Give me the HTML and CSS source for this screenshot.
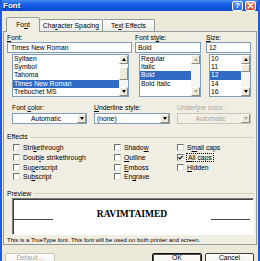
FILE: index.html
```html
<!DOCTYPE html>
<html lang="en">
<head>
  <meta charset="UTF-8" />
  <title>Font</title>
  <link rel="stylesheet" href="styles.css">
</head>
<body>
  <div class="window">
    <div class="titlebar">
      <span class="title">Font</span>
      <div class="caption">
        <span class="cbtn help">?</span>
        <span class="cbtn close">
          <svg width="7" height="7" viewBox="0 0 7 7"><path d="M1 1 L6 6 M6 1 L1 6" stroke="#fff" stroke-width="1.4" stroke-linecap="round"/></svg>
        </span>
      </div>
    </div>

    <div class="tabs">
      <span class="tab active tab-font">Fo<u>n</u>t</span>
      <span class="tab tab-spacing">Cha<u>r</u>acter Spacing</span>
      <span class="tab tab-effects">Te<u>x</u>t Effects</span>
    </div>

    <div class="panel">
      <div class="pickers">
        <div class="picker">
          <span class="lbl"><u>F</u>ont:</span>
          <div class="edit edit-font">Times New Roman</div>
          <div class="list list-font">
            <ul>
              <li>Sylfaen</li>
              <li>Symbol</li>
              <li>Tahoma</li>
              <li class="sel">Times New Roman</li>
              <li>Trebuchet MS</li>
            </ul>
            <div class="vscroll">
              <span class="sbtn up"></span>
              <span class="track t-font-a"></span>
              <span class="thumb t-font"></span>
              <span class="track"></span>
              <span class="sbtn down"></span>
            </div>
          </div>
        </div>
        <div class="picker">
          <span class="lbl">Font st<u>y</u>le:</span>
          <div class="edit edit-style">Bold</div>
          <div class="list list-style">
            <ul>
              <li>Regular</li>
              <li>Italic</li>
              <li class="sel">Bold</li>
              <li>Bold Italic</li>
            </ul>
            <div class="vscroll">
              <span class="sbtn up off"></span>
              <span class="track"></span>
              <span class="sbtn down off"></span>
            </div>
          </div>
        </div>
        <div class="picker">
          <span class="lbl"><u>S</u>ize:</span>
          <div class="edit edit-size">12</div>
          <div class="list list-size">
            <ul>
              <li>10</li>
              <li>11</li>
              <li class="sel">12</li>
              <li>14</li>
              <li>16</li>
            </ul>
            <div class="vscroll">
              <span class="sbtn up"></span>
              <span class="thumb t-size"></span>
              <span class="track"></span>
              <span class="sbtn down"></span>
            </div>
          </div>
        </div>
      </div>

      <div class="combos">
        <div class="combo">
          <span class="lbl">Font <u>c</u>olor:</span>
          <div class="dropdown">
            <span class="dd-text center">Automatic</span>
            <span class="dd-btn"></span>
          </div>
        </div>
        <div class="combo">
          <span class="lbl"><u>U</u>nderline style:</span>
          <div class="dropdown">
            <span class="dd-text">(none)</span>
            <span class="dd-btn"></span>
          </div>
        </div>
        <div class="combo disabled">
          <span class="lbl">Underl<u>i</u>ne color:</span>
          <div class="dropdown">
            <span class="dd-text center">Automatic</span>
            <span class="dd-btn"></span>
          </div>
        </div>
      </div>

      <div class="group-head">Effects</div>
      <div class="effects">
        <span class="chk"><i class="box"></i><span>Stri<u>k</u>ethrough</span></span>
        <span class="chk"><i class="box"></i><span>Doub<u>l</u>e strikethrough</span></span>
        <span class="chk"><i class="box"></i><span>Su<u>p</u>erscript</span></span>
        <span class="chk"><i class="box"></i><span>Su<u>b</u>script</span></span>
        <span class="chk"><i class="box"></i><span>Shado<u>w</u></span></span>
        <span class="chk"><i class="box"></i><span><u>O</u>utline</span></span>
        <span class="chk"><i class="box"></i><span><u>E</u>mboss</span></span>
        <span class="chk"><i class="box"></i><span>En<u>g</u>rave</span></span>
        <span class="chk"><i class="box"></i><span>S<u>m</u>all caps</span></span>
        <span class="chk"><i class="box"><svg width="5" height="5" viewBox="0 0 5 5"><polyline points="0.4,2.3 1.9,3.9 4.6,0.8" fill="none" stroke="#000" stroke-width="1.2"/></svg></i><span class="focus"><u>A</u>ll caps</span></span>
        <span class="chk"><i class="box"></i><span><u>H</u>idden</span></span>
      </div>

      <div class="group-head preview-head">Preview</div>
      <div class="preview">
        <span class="rule rule-left"></span>
        <span class="sample">RAVIMTAIMED</span>
        <span class="rule rule-right"></span>
      </div>
      <p class="note">This is a TrueType font. This font will be used on both printer and screen.</p>
    </div>

    <div class="buttons">
      <span class="btn off"><u>D</u>efault...</span>
      <span class="btn btn-ok">OK</span>
      <span class="btn btn-cancel">Cancel</span>
    </div>
  </div>
</body>
</html>
```

FILE: styles.css
```css
* { box-sizing: border-box; }
body { margin: 0; font-family: "Liberation Sans", Arial, sans-serif; font-size: 6.8px; color: #000; background: #fff; }
u { text-decoration-thickness: 1px; text-underline-offset: 1px; }

.window { width: 260px; height: 261px; overflow: hidden; background: #ECE9D8; border-left: 2px solid #1F5ADF; border-right: 2px solid #1F5ADF; }

/* title bar */
.titlebar { height: 11px; display: flex; align-items: center; justify-content: space-between; padding: 0 2px 0 1px; background: linear-gradient(#4A8EF4, #1861E6 35%, #0B52DA 80%, #0A4BC8); }
.title { color: #fff; font-weight: bold; font-size: 8px; line-height: 11px; text-shadow: 1px 1px 0 #0A2A8A; }
.caption { display: flex; gap: 2px; }
.cbtn { width: 11px; height: 10px; border: 1px solid #fff; border-radius: 2px; display: flex; align-items: center; justify-content: center; color: #fff; font-weight: bold; font-size: 8px; line-height: 8px; }
.help { background: linear-gradient(#5C9BF7, #2761E3); }
.close { background: linear-gradient(#EC8A66, #D3431C); }

/* tabs */
.tabs { height: 20px; display: flex; align-items: flex-end; padding-left: 4px; }
.tab { height: 12px; line-height: 11px; text-align: center; border: 1px solid #919B9C; border-bottom: none; border-radius: 2px 2px 0 0; background: linear-gradient(#FEFEFE, #ECEBE6); white-space: nowrap; }
.tab.active { height: 15px; line-height: 13px; margin-bottom: -1px; position: relative; z-index: 1; background: #F0EEE3; border-top-color: #9AA3A4; }
.tab-font { width: 34px; }
.tab-spacing { width: 63px; border-left: none; }
.tab-effects { width: 52px; border-left: none; }

/* panel */
.panel { margin: 0 1px; border: 1px solid #919B9C; background: #F0EEE3; padding: 2px 2px 1px 3px; }
.lbl { display: block; height: 8px; line-height: 8px; white-space: nowrap; }

.pickers { display: grid; grid-template-columns: 128px 71px 1fr; }
.edit { height: 11px; line-height: 9px; padding-left: 2px; border: 1px solid #7F9DB9; background: #fff; white-space: nowrap; }
.edit-font { width: 125px; padding-left: 3px; }
.edit-style { width: 66px; }
.edit-size { width: 45px; }

.list { margin-top: 1px; height: 43px; border: 1px solid #7F9DB9; background: #fff; display: flex; }
.list ul { flex: 1; margin: 0; padding: 0; list-style: none; overflow: hidden; }
.list li { height: 8.2px; line-height: 8.2px; padding-left: 1px; white-space: nowrap; }
.list li.sel { background: #316AC5; color: #fff; }
.list-font { margin-left: 5px; width: 117px; }
.list-style { margin-left: 4px; width: 62px; }
.list-size { margin-left: 3px; width: 42px; }

.vscroll { width: 9px; display: flex; flex-direction: column; background: #F5F4EE; }
.sbtn, .thumb { display: flex; align-items: center; justify-content: center; background: #ECE9D8; border: 1px solid; border-color: #fff #8E8C82 #8E8C82 #fff; }
.sbtn { height: 9px; }
.track { flex: 1; }
.t-font-a { flex: 0 0 3px; }
.t-font { height: 13px; }
.t-size { height: 8px; }
.sbtn::before { content: ""; width: 0; height: 0; border-left: 2.5px solid transparent; border-right: 2.5px solid transparent; }
.sbtn.up::before { border-bottom: 3px solid #000; }
.sbtn.down::before { border-top: 3px solid #000; }
.sbtn.off.up::before { border-bottom-color: #ACA899; }
.sbtn.off.down::before { border-top-color: #ACA899; }

/* colour / underline combos */
.combos { display: grid; grid-template-columns: 75px 76px 74px; column-gap: 7px; margin: 7px 0 0 5px; }
.dropdown { margin-top: 1px; height: 11px; display: flex; border: 1px solid #7F9DB9; background: #fff; }
.dd-text { flex: 1; line-height: 9px; padding-left: 2px; white-space: nowrap; }
.dd-text.center { text-align: center; }
.dd-btn { width: 9px; display: flex; align-items: center; justify-content: center; background: #ECE9D8; border: 1px solid; border-color: #fff #8E8C82 #8E8C82 #fff; }
.dd-btn::before { content: ""; border-left: 2.5px solid transparent; border-right: 2.5px solid transparent; border-top: 3px solid #000; }
.disabled .lbl, .disabled .dd-text { color: #ACA899; }
.disabled .dropdown { border-color: #C9C7BA; background: #F2F0E6; }
.disabled .dd-btn::before { border-top-color: #ACA899; }

/* group boxes */
.group-head { display: flex; align-items: center; gap: 3px; margin-top: 9px; height: 8px; line-height: 8px; }
.group-head::after { content: ""; flex: 1; border-top: 1px solid #D0D0BF; }
.preview-head { margin-top: 8px; }

.effects { display: grid; grid-auto-flow: column; grid-template-rows: repeat(4, 9.7px); grid-template-columns: 101px 63px 1fr; margin-top: 2px; padding-left: 6px; }
.chk { display: flex; align-items: center; gap: 3px; white-space: nowrap; }
.box { width: 7px; height: 7px; display: flex; align-items: center; justify-content: center; background: #fff; border: 1px solid; border-color: #6E6E6E #E4E2D8 #E4E2D8 #6E6E6E; }
.focus { outline: 1px dotted #000; outline-offset: 0; padding: 0 1px; }

.preview { margin-left: 5px; height: 37px; display: flex; align-items: center; background: #fff; border: 1px solid; border-color: #7A7A7A #fff #fff #7A7A7A; box-shadow: inset 1px 1px 0 #3F3F3F; }
.rule { width: 39px; height: 1px; margin-top: 6px; background: #4A4A4A; }
.rule-left { margin-left: 1px; }
.rule-right { margin-right: 3px; }
.sample { flex: 1; text-align: center; font-family: "Liberation Serif", "Times New Roman", serif; font-weight: bold; font-size: 9.5px; line-height: 10px; margin-bottom: 5px; }

.note { margin: 2px 0 0; font-size: 6px; line-height: 6px; white-space: nowrap; }

/* buttons */
.buttons { display: flex; padding: 8px 4px 0 3px; }
.btn { height: 15px; line-height: 6px; padding-top: 1px; text-align: center; border: 1px solid #3F3F3F; border-radius: 2px; background: linear-gradient(#FFFFFF, #F1EFE7 70%, #E2DED2); }
.btn.off { width: 50px; color: #ACA899; border-color: #C9C7BA; }
.btn-ok { width: 50px; margin-left: auto; border-color: #111; box-shadow: inset 0 0 0 1px #4D4D4D; }
.btn-cancel { width: 49px; margin-left: 3px; }
```
